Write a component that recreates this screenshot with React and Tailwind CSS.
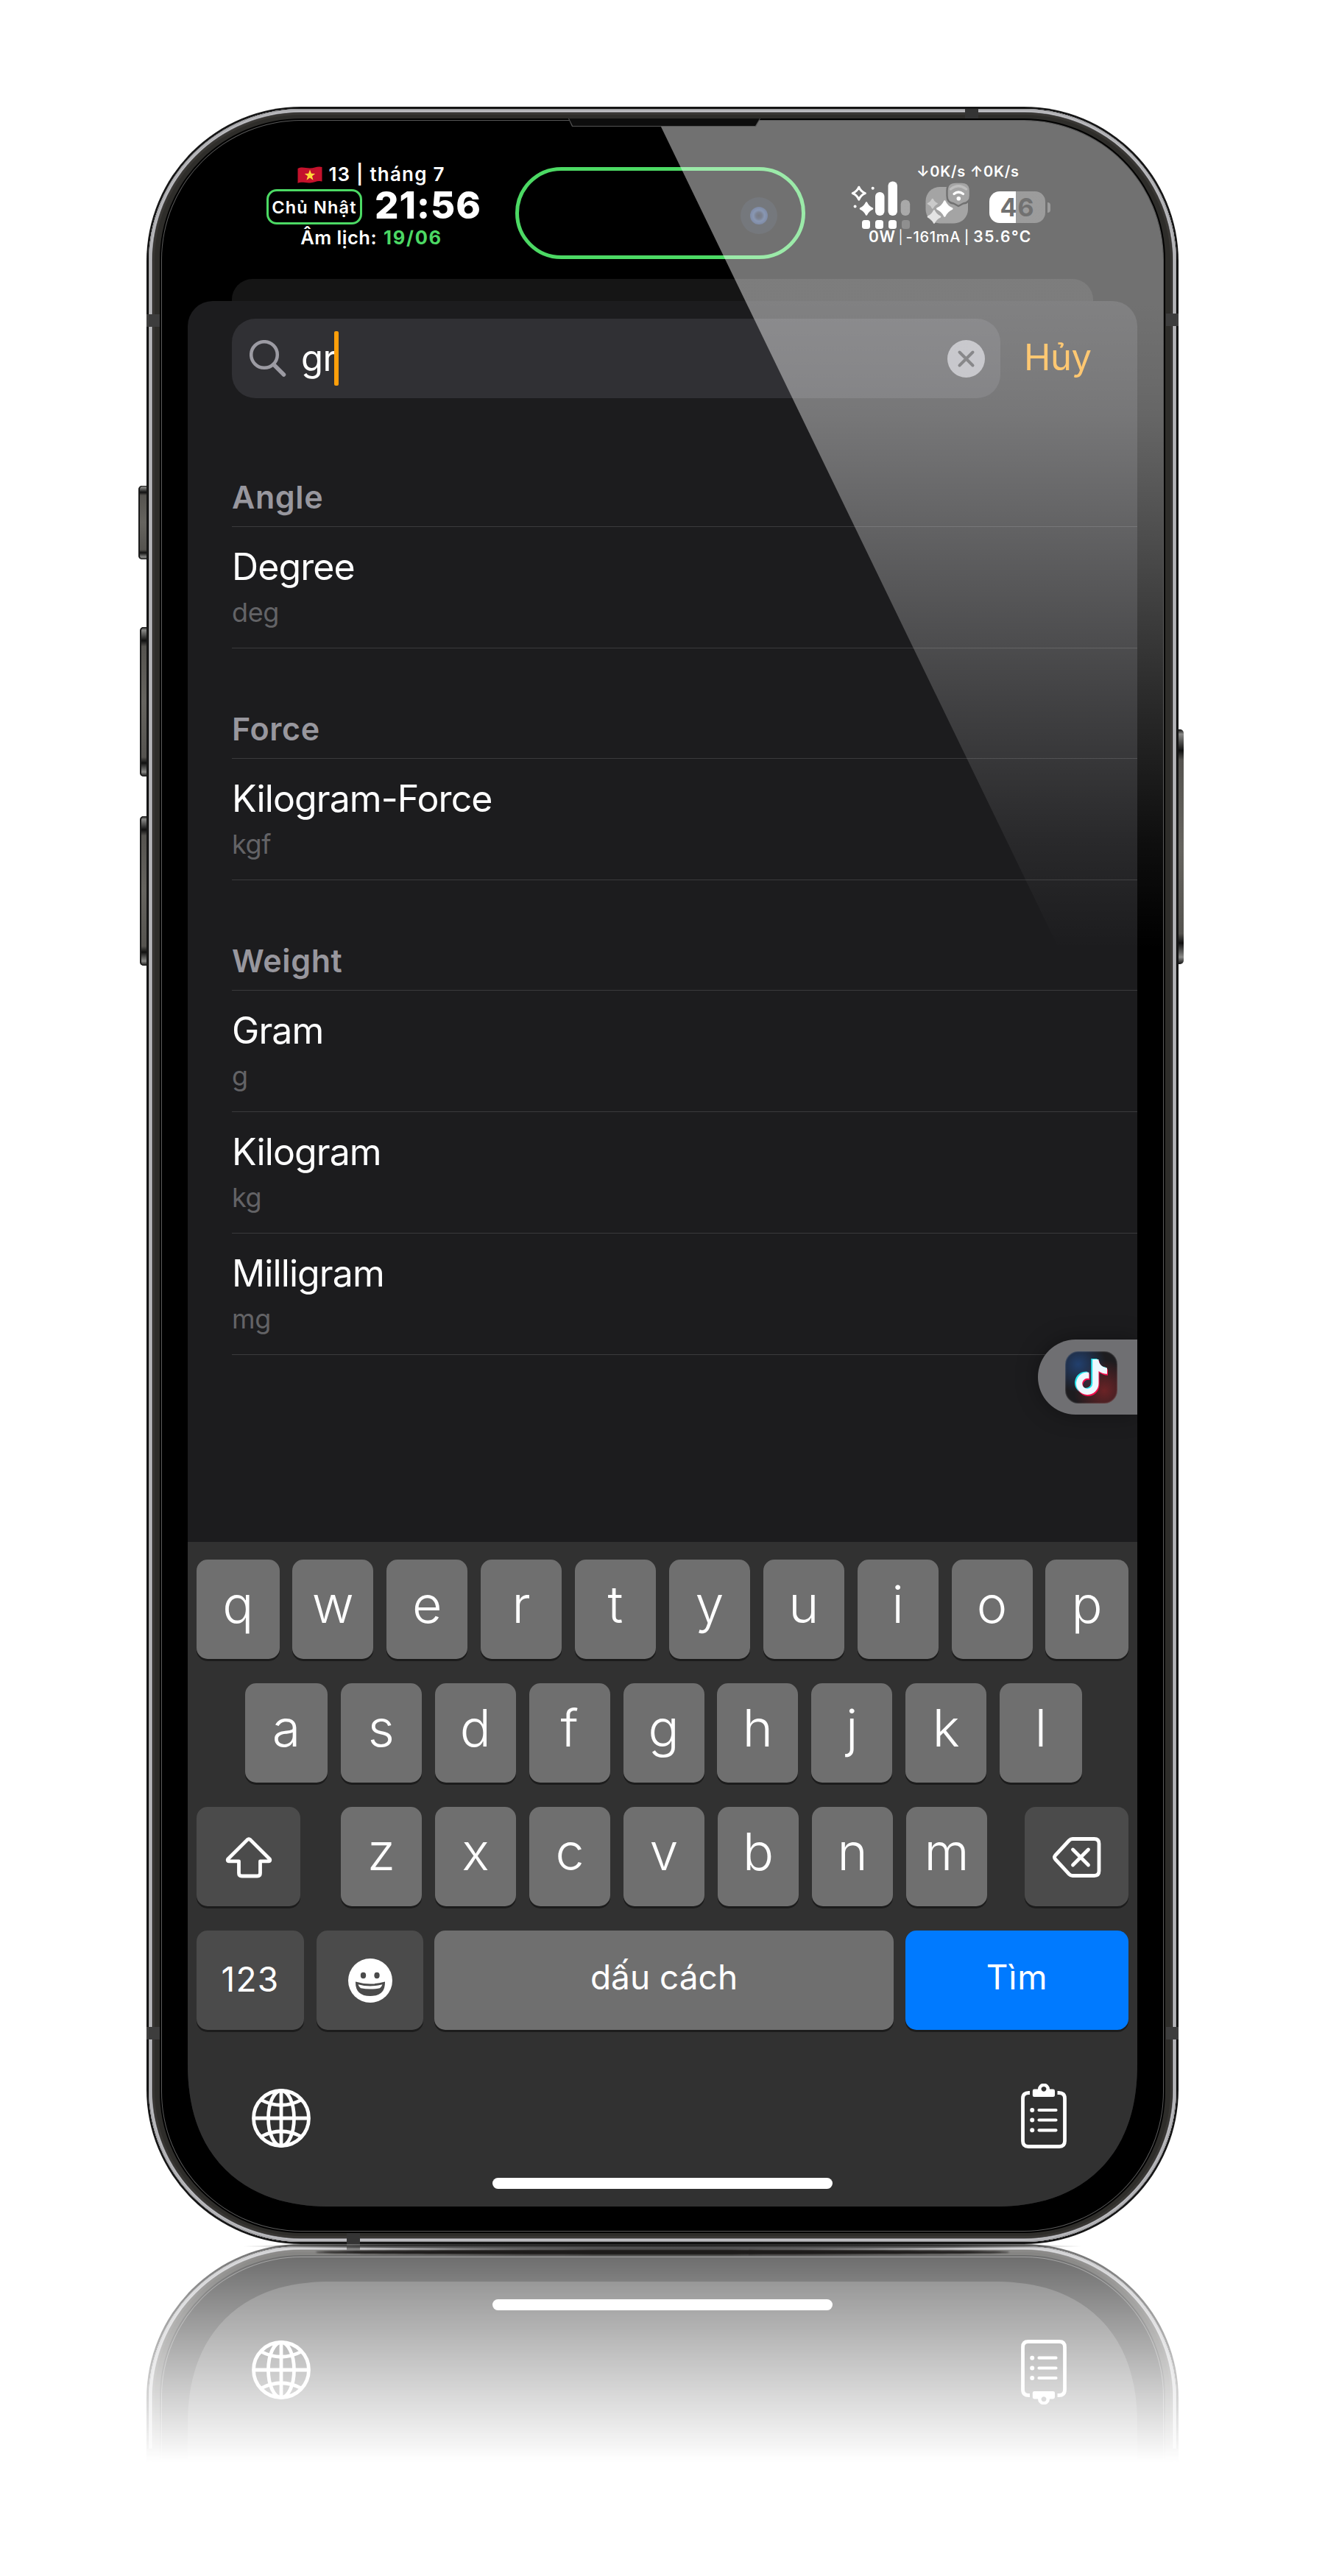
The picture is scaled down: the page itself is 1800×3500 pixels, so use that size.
import React from "react";
import { FaTiktok } from "react-icons/fa";

const sections = [
  { title: "Angle", units: [["Degree", "deg"]] },
  { title: "Force", units: [["Kilogram-Force", "kgf"]] },
  {
    title: "Weight",
    units: [
      ["Gram", "g"],
      ["Kilogram", "kg"],
      ["Milligram", "mg"],
    ],
  },
];

const star = (cx, cy, r) =>
  `M${cx} ${cy - r}Q${cx + r * 0.3} ${cy - r * 0.3} ${cx + r} ${cy}Q${cx + r * 0.3} ${cy + r * 0.3} ${cx} ${cy + r}Q${cx - r * 0.3} ${cy + r * 0.3} ${cx - r} ${cy}Q${cx - r * 0.3} ${cy - r * 0.3} ${cx} ${cy - r}Z`;

function FlagIcon() {
  return (
    <svg width="34" height="24" viewBox="0 0 34 24" className="mt-[4px] shrink-0">
      <path d="M0.5 3C6 0 11 2.500 17 2.500S28 -1 33.500 1V20.500C28 18.500 23 22 17 22.500S6 20.500 0.500 23Z" fill="#c4122c" />
      <path d="M17 4.500l1.900 5.300 5.400 0.100-4.300 3.400 1.500 5.400-4.500-3.200-4.500 3.200 1.500-5.400-4.300-3.400 5.400-0.100z" fill="#ffd93b" />
    </svg>
  );
}

function SignalIcon() {
  return (
    <svg width="82" height="68" viewBox="1158 245 82 68" className="shrink-0 overflow-visible">
      <path d={star(1166.800, 262.700, 8.500)} fill="none" stroke="#fff" strokeWidth="3" strokeLinejoin="round" />
      <path d={star(1177, 283.500, 8)} fill="#fff" stroke="#fff" strokeWidth="2.500" strokeLinejoin="round" />
      <circle cx="1185.700" cy="255.700" r="2" fill="#fff" />
      <circle cx="1161.600" cy="280.500" r="2" fill="#fff" />
      <rect x="1189" y="261" width="12.500" height="32" rx="6" fill="#fff" />
      <rect x="1206.500" y="246.500" width="12.500" height="46.500" rx="6" fill="#fff" />
      <rect x="1223.700" y="271.500" width="12.500" height="21.500" rx="6" fill="#646464" />
      <rect x="1171" y="299" width="11" height="12" rx="3.500" fill="#fff" />
      <rect x="1189" y="299" width="11" height="12" rx="3.500" fill="#fff" />
      <rect x="1207" y="299" width="11" height="12" rx="3.500" fill="#fff" />
      <rect x="1225" y="299" width="11" height="12" rx="3.500" fill="#363636" />
    </svg>
  );
}

function WifiIcon() {
  return (
    <svg width="64" height="68" viewBox="1257 245 64 68" className="ml-[17px] shrink-0 overflow-visible">
      <rect x="1257.500" y="254" width="57.500" height="49.500" rx="19" fill="#5c5c5c" />
      <path
        d="M1298 247.500H1306.500Q1318 247.500 1318 259V266Q1318 275.500 1308.500 276.500L1302 280L1295.500 276.500Q1286.500 275.500 1286.500 266V259Q1286.500 247.500 1298 247.500Z"
        fill="#5c5c5c" stroke="#000" strokeWidth="2.500" strokeLinejoin="round"
      />
      <path d="M1291.500 257Q1302 248.500 1312.500 257" fill="none" stroke="#8a8a8a" strokeWidth="3.200" strokeLinecap="round" />
      <path d="M1296 263.500Q1302 258.500 1308.500 263.500" fill="none" stroke="#fff" strokeWidth="3.200" strokeLinecap="round" />
      <circle cx="1302.300" cy="269.700" r="2.800" fill="#fff" />
      <path d={star(1266.800, 276.700, 6)} fill="#a0a0a0" stroke="#a0a0a0" strokeWidth="2" strokeLinejoin="round" />
      <path d={star(1269, 294.500, 8)} fill="#cfcfcf" stroke="#cfcfcf" strokeWidth="2.500" strokeLinejoin="round" />
      <path d={star(1283.300, 283.500, 10)} fill="#fff" stroke="#fff" strokeWidth="2.500" strokeLinejoin="round" />
    </svg>
  );
}

function GlobeIcon() {
  return (
    <svg width="80" height="80" viewBox="0 0 80 80" fill="none" stroke="#fff" strokeWidth="4.800" className="mt-[7px]">
      <circle cx="40" cy="40" r="37.500" />
      <ellipse cx="40" cy="40" rx="17.500" ry="37.500" />
      <path d="M40 2.500V77.500M2.500 40H77.500M12.500 15Q40 29.500 67.500 15M12.500 65Q40 50.500 67.500 65" />
    </svg>
  );
}

function ClipboardIcon() {
  return (
    <svg width="62" height="88" viewBox="0 0 62 88" fill="none">
      <path d="M12 12.500H10.500Q2.500 12.500 2.500 20V78Q2.500 85.500 10 85.500H52Q59.500 85.500 59.500 78V20Q59.500 12.500 51.500 12.500H49.500" stroke="#fff" strokeWidth="4.800" />
      <path fillRule="evenodd" d="M23 7.600a8 8 0 0 1 16 0H43.500Q46 7.600 46 10V16Q46 18 43.500 18H18Q15.800 18 15.800 16V10Q15.800 7.600 18 7.600ZM31 3.900a3.400 3.400 0 1 0 0.010 0Z" fill="#fff" />
      <circle cx="15.200" cy="36" r="3" fill="#fff" />
      <circle cx="15.200" cy="49.500" r="3" fill="#fff" />
      <circle cx="15.200" cy="63.300" r="3" fill="#fff" />
      <path d="M24.500 36H47.500M24.500 49.500H47.500M24.500 63.300H47.500" stroke="#fff" strokeWidth="4.200" strokeLinecap="round" />
    </svg>
  );
}

function ShiftIcon() {
  return (
    <svg width="64" height="56" viewBox="0 0 64 56" fill="none" stroke="#fff" strokeWidth="4.800" strokeLinejoin="round">
      <path d="M30 3.600Q32 1.800 34 3.600L60.500 30Q61.500 32.600 59 32.800H47.500V49Q47.500 53 43.500 53H22.500Q18.500 53 18.500 49V32.800H5Q2.500 32.600 3.500 30Z" />
    </svg>
  );
}

function BackspaceIcon() {
  return (
    <svg width="66" height="55" viewBox="0 0 66 55" fill="none" stroke="#fff" strokeWidth="4.800" strokeLinejoin="round" strokeLinecap="round">
      <path d="M27 2.500H56.500Q63 2.500 63 9V46Q63 52.500 56.500 52.500H27Q24.500 52.500 22.500 50.500L3.500 30Q1.500 27.500 3.500 25L22.500 4.500Q24.500 2.500 27 2.500Z" />
      <path d="M27.500 17L48.500 38M48.500 17L27.500 38" />
    </svg>
  );
}

function EmojiIcon() {
  return (
    <svg width="60" height="60" viewBox="0 0 60 60">
      <circle cx="30" cy="30" r="30" fill="#fff" />
      <ellipse cx="20.500" cy="23" rx="3.700" ry="4.200" fill="#4b4b4b" />
      <ellipse cx="39" cy="23" rx="3.700" ry="4.200" fill="#4b4b4b" />
      <path d="M10 31.500Q30 37.500 50 31.500Q50.500 51 30 51Q9.500 51 10 31.500Z" fill="#4b4b4b" />
      <path d="M13.500 35.200Q30 39.800 46.500 35.200Q45.500 38.500 43 40.200Q30 43 17 40.200Q14.500 38.500 13.500 35.200Z" fill="#fff" />
    </svg>
  );
}

function StatusBar() {
  return (
    <div className="flex h-[177px] shrink-0 items-start pl-[107px] text-white">
      <div className="w-[292px] pt-[20px]">
        <div className="flex h-[30px] w-[285px] justify-center gap-[8px]">
          <FlagIcon />
          <span className="text-[26px] leading-[30px] font-semibold tracking-[1.2px]">13 | tháng 7</span>
        </div>
        <div className="mt-[5px] flex h-[48px] gap-[17px]">
          <div className="h-[48px] w-[133px] rounded-[14px] border-[3px] border-[#4cd964] pt-[2px] text-center text-[23.5px] leading-[40px] font-semibold tracking-[1.2px] whitespace-nowrap">
            Chủ Nhật
          </div>
          <span className="-mt-[2px] text-[51px] leading-[48px] font-extrabold tracking-[1px]">21:56</span>
        </div>
        <div className="mt-[3px] flex h-[30px] w-[285px] justify-center gap-[9px] text-[25.5px] leading-[30px] font-semibold">
          <span className="tracking-[0.5px]">Âm lịch:</span>
          <span className="font-bold tracking-[1.7px] text-[#4cd964]">19/06</span>
        </div>
      </div>

      <div className="mt-[25px] ml-[46px] flex h-[125px] w-[394px] items-center justify-end rounded-full border-[5px] border-[#4cd964] pr-[33px]">
        <div className="mt-[7px] flex size-[50px] items-center justify-center rounded-full bg-[#080d15]">
          <div className="size-[24px] rounded-full bg-[radial-gradient(circle_at_50%_50%,#0d1322_0,#14203d_25%,#2b4577_45%,#162b5c_75%,#1a2f55_100%)]" />
        </div>
      </div>

      <div className="ml-[64px] w-[270px] pt-[19px]">
        <p className="h-[24px] pl-[87px] text-[20px] leading-[24px] font-semibold tracking-[0.7px] whitespace-nowrap">↓0K/s ↑0K/s</p>
        <div className="flex h-[65px]">
          <SignalIcon />
          <WifiIcon />
          <div className="mt-[15px] ml-[23px] h-[43px] w-[76px] shrink-0 rounded-[14px] bg-[linear-gradient(90deg,#fff_47%,#4d4d4d_47%)] text-center text-[34px] leading-[44px] font-bold tracking-[1px] text-black">
            46
          </div>
          <div className="mt-[30px] ml-[3px] h-[14px] w-[4px] rounded-r-full bg-[#4d4d4d]" />
        </div>
        <div className="flex h-[24px] items-baseline pl-[22px] text-[21px] leading-[24px] font-semibold whitespace-nowrap">
          <span className="tracking-[0.6px]">0W</span>
          <span className="ml-[4px] text-[18px] font-normal">|</span>
          <span className="ml-[4px] text-[20px] font-medium tracking-[0.7px]">-161mA</span>
          <span className="ml-[5px] text-[18px] font-medium">|</span>
          <span className="ml-[6px] tracking-[1.5px]">35.6°C</span>
        </div>
      </div>
    </div>
  );
}

function SearchBar() {
  return (
    <div className="flex pt-[24px] pl-[60px]">
      <div className="flex h-[108px] w-[1044px] items-center rounded-[32px] bg-[#303034] pr-[21px] pl-[24px]">
        <svg width="50" height="50" viewBox="0 0 50 50" fill="none" stroke="#9c9ba3" strokeLinecap="round">
          <circle cx="20" cy="20" r="17.800" strokeWidth="4.500" />
          <path d="M33.500 34L46.500 47" strokeWidth="5.500" />
        </svg>
        <span className="ml-[20px] text-[49px] leading-[108px] tracking-[-0.5px] text-white">gr</span>
        <span className="-ml-[3px] h-[74px] w-[6px] rounded-[2px] bg-[#ff9f0a]" />
        <svg width="51" height="51" viewBox="0 0 51 51" className="ml-auto">
          <circle cx="25.500" cy="25.500" r="25.500" fill="#a0a0a8" />
          <path d="M16.500 16.500L34.500 34.500M34.500 16.500L16.500 34.500" stroke="#303034" strokeWidth="4" strokeLinecap="round" />
        </svg>
      </div>
      <span className="ml-[32px] text-[49px] leading-[106px] tracking-[-0.5px] text-[#ff9f0a]">Hủy</span>
    </div>
  );
}

function UnitList() {
  return (
    <div className="mt-[25px] ml-[60px]">
      {sections.map((s) => (
        <section key={s.title}>
          <h2 className="flex h-[150px] items-end border-b border-[#3a3a3c] pb-[15px] text-[43px] leading-[50px] font-semibold tracking-[0.6px] text-[#98979e]">
            {s.title}
          </h2>
          {s.units.map(([name, abbr]) => (
            <div key={name} className="h-[165px] border-b border-[#3a3a3c] pt-[24px]">
              <p className="text-[50px] leading-[60px] tracking-[-0.9px] text-white">{name}</p>
              <p className="mt-[10px] text-[36px] leading-[44px] tracking-[-0.4px] text-[#636366]">{abbr}</p>
            </div>
          ))}
        </section>
      ))}
    </div>
  );
}

function FloatingShortcut() {
  return (
    <div className="absolute top-[1618px] right-0 flex h-[102px] w-[135px] items-center rounded-l-[51px] bg-[#6f6f72] pl-[37px] shadow-[0_0_30px_rgba(0,0,0,0.35)]">
      <div className="relative size-[71px] rounded-[18px] bg-[radial-gradient(circle_at_25%_25%,#22406e_0,transparent_50%),radial-gradient(circle_at_75%_75%,#6b2326_0,transparent_55%)] bg-[#1d1c1f] shadow-[inset_0_0_2px_rgba(255,255,255,0.5)]">
        <FaTiktok className="absolute top-[10px] left-[10px] size-[48px] text-[#25e5ee]" />
        <FaTiktok className="absolute top-[13px] left-[13px] size-[48px] text-[#f5104e]" />
        <FaTiktok className="absolute top-[11.500px] left-[11.500px] size-[48px] text-[#eef8ff]" />
      </div>
    </div>
  );
}

const keyBase = "h-[135px] rounded-[15px] shadow-[0_3px_0_#1c1c1c] text-white text-center";

function Letter({ children, className = "w-[110px]" }) {
  return <div className={`${keyBase} ${className} bg-[#6f6f6f] text-[70px] leading-[122px] font-[340]`}>{children}</div>;
}

function Dock() {
  return (
    <div className="shrink-0 pb-[24px]">
      <div className="flex h-[88px] items-start justify-between pr-[96px] pl-[87px]">
        <GlobeIcon />
        <ClipboardIcon />
      </div>
      <div className="mx-auto mt-[40px] h-[15px] w-[462px] rounded-full bg-white" />
    </div>
  );
}

function Keyboard() {
  return (
    <div className="h-[903px] shrink-0 bg-[#313131] pt-[24px]">
      <div className="flex flex-col gap-[33px] px-[12px]">
        <div className="flex justify-between">
          {"qwertyuiop".split("").map((c, i) => (
            <Letter key={c} className={i === 0 || i === 9 ? "w-[112.500px]" : "w-[110px]"}>{c}</Letter>
          ))}
        </div>
        <div className="flex justify-between pr-[63px] pl-[66px]">
          {"asdfghjkl".split("").map((c, i) => (
            <Letter key={c} className={i === 0 || i === 8 ? "w-[112px]" : "w-[110px]"}>{c}</Letter>
          ))}
        </div>
        <div className="flex justify-between">
          <div className={`${keyBase} flex w-[141px] items-center justify-center bg-[#4b4b4b] pt-[2px]`}>
            <ShiftIcon />
          </div>
          <div className="flex gap-[18px] pl-[4px]">
            {"zxcvbnm".split("").map((c) => (
              <Letter key={c}>{c}</Letter>
            ))}
          </div>
          <div className={`${keyBase} flex w-[141px] items-center justify-center bg-[#4b4b4b] pt-[2px]`}>
            <BackspaceIcon />
          </div>
        </div>
        <div className="flex">
          <div className={`${keyBase} w-[146px] bg-[#4b4b4b] text-[46px] leading-[133px] tracking-[1.200px]`}>123</div>
          <div className={`${keyBase} ml-[17px] flex w-[145px] items-center justify-center bg-[#4b4b4b]`}>
            <EmojiIcon />
          </div>
          <div className={`${keyBase} ml-[15px] w-[624px] bg-[#6f6f6f] text-[46px] leading-[127px]`}>dấu cách</div>
          <div className={`${keyBase} ml-[16px] w-[303px] bg-[#007aff] text-[46px] leading-[127px] tracking-[0.8px]`}>Tìm</div>
        </div>
      </div>
      <div className="mt-[73px]">
        <Dock />
      </div>
    </div>
  );
}

/* Metal band, bezel rings and glass shared by the handset and its mirror image. */
function Shell({ className, children, overlay }) {
  return (
    <div className={`relative w-[1402px] rounded-[210px] bg-[#161616] p-[3px] ${className}`}>
      <div className="h-full rounded-[207px] bg-[#77777a] p-[5px] shadow-[inset_0_0_0_1px_#8c8c8e,inset_0_0_0_2px_#c6c6ca,inset_0_0_0_3px_#a4a4a7,inset_0_0_0_4px_#d0d0d4]">
        <div className="h-full rounded-[202px] bg-[#2e2d2a] px-[10px] pt-[8px] pb-[7px] shadow-[inset_0_0_0_3px_#383633]">
          <div className="h-full rounded-[192px] bg-black p-[2px]">
            <div className="h-full rounded-[190px] bg-[#5a5a5a] p-px">
              <div className="relative h-full overflow-hidden rounded-[189px] bg-black px-[35px] pt-[38px] pb-[33px]">
                {children}
                {overlay}
              </div>
            </div>
          </div>
        </div>
      </div>
      <div className="absolute bottom-[278px] left-0 h-[17px] w-[18px] bg-[#3d3d3d]" />
      <div className="absolute right-0 bottom-[278px] h-[17px] w-[17px] bg-[#3d3d3d]" />
      <div className="absolute bottom-0 left-[272px] h-[15px] w-[18px] bg-[#343434]" />
    </div>
  );
}

function Glare() {
  return (
    <div className="pointer-events-none absolute inset-x-0 top-0 h-[1130px] bg-[linear-gradient(180deg,rgba(255,255,255,0.443)_0,rgba(255,255,255,0.443)_250px,rgba(255,255,255,0.42)_345px,rgba(255,255,255,0.40)_400px,rgba(255,255,255,0.355)_475px,rgba(255,255,255,0.31)_555px,rgba(255,255,255,0.21)_715px,rgba(255,255,255,0.16)_796px,rgba(255,255,255,0.06)_976px,rgba(255,255,255,0)_1126px)] [clip-path:polygon(674px_0,100%_0,100%_1130px,1221px_1130px)]" />
  );
}

const sideLeft = "absolute bg-[linear-gradient(180deg,#111_0,#8a8a88_2%,#111_9%,#55534f_13%,#66645f_50%,#55534f_87%,#111_91%,#8a8a88_97%,#111_100%)] shadow-[inset_2px_0_0_#1b1b1b]";

function Phone() {
  return (
    <div className="relative h-[2904px] w-[1402px]">
      <div className={`${sideLeft} top-[515px] -left-[11px] h-[100px] w-[14px] rounded-l-[5px]`} />
      <div className={`${sideLeft} top-[707px] -left-[9px] h-[203px] w-[12px] rounded-l-[5px]`} />
      <div className={`${sideLeft} top-[964px] -left-[9px] h-[203px] w-[12px] rounded-l-[5px]`} />
      <div className={`${sideLeft} top-[846px] -right-[7px] h-[319px] w-[12px] rounded-r-[5px]`} />
      <Shell className="h-[2904px]" overlay={<Glare />}>
        <div className="flex h-full flex-col overflow-hidden rounded-b-[195px] [corner-shape:superellipse(1.2)]">
          <StatusBar />
          <div className="mx-[60px] h-[30px] shrink-0 rounded-t-[28px] bg-[#151515] [corner-shape:round]" />
          <div className="flex min-h-0 flex-1 flex-col rounded-t-[34px] bg-[#1c1c1e] [corner-shape:round]">
            <SearchBar />
            <UnitList />
            <div className="flex-1" />
            <Keyboard />
          </div>
        </div>
        <div className="absolute inset-y-0 top-[38px] right-[35px]">
          <FloatingShortcut />
        </div>
      </Shell>
      <div className="absolute top-[282px] left-0 h-[17px] w-[18px] bg-[#3d3d3d]" />
      <div className="absolute top-[281px] right-0 h-[17px] w-[17px] bg-[#3d3d3d]" />
      <div className="absolute top-[3px] left-[1112px] h-[13px] w-[18px] bg-[#343434]" />
      <div className="absolute top-[16px] left-[573px] h-[11px] w-[261px] bg-[#555] [clip-path:polygon(0_0,100%_0,calc(100%-6px)_100%,5px_100%)]">
        <div className="h-[10px] bg-[#0d0d0d] [clip-path:polygon(1px_0,calc(100%-1px)_0,calc(100%-7px)_100%,6px_100%)]" />
      </div>
    </div>
  );
}

function Reflection() {
  return (
    <div className="relative w-[1402px]">
      <div className="h-[300px] overflow-hidden [mask-image:linear-gradient(180deg,rgba(0,0,0,0.605)_0,rgba(0,0,0,0)_297px)]">
        <Shell className="h-[800px] -scale-y-100">
          <div className="flex h-full flex-col justify-end overflow-hidden rounded-b-[195px] bg-[#313131] [corner-shape:superellipse(1.2)]">
            <Dock />
          </div>
        </Shell>
      </div>
      <div className="absolute -top-[2px] left-[128px] h-[10px] w-[1146px] rounded-[50%] bg-[radial-gradient(closest-side,rgba(0,0,0,0.7)_0,rgba(0,0,0,0.55)_70%,transparent_100%)]" />
      <div className="absolute top-[7px] left-[230px] h-[8px] w-[942px] rounded-[50%] bg-[#1d1b1a] blur-[1px]" />
    </div>
  );
}

export default function App() {
  return (
    <main className="flex h-[3500px] w-[1800px] flex-col overflow-hidden bg-white pt-[145px] pl-[199px] font-['Inter',sans-serif]">
      <Phone />
      <Reflection />
    </main>
  );
}
